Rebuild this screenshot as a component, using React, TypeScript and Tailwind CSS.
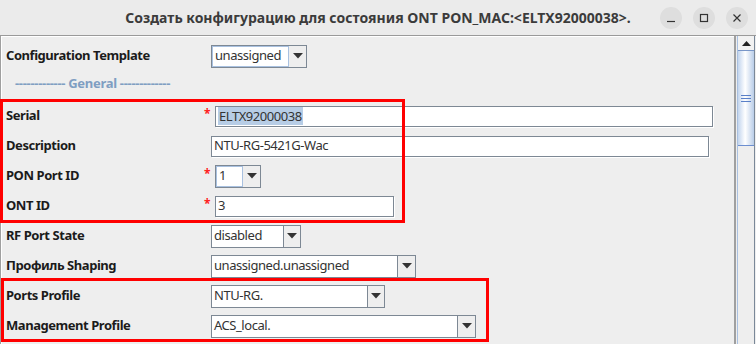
const font = { fontFamily: '"Noto Sans", "DejaVu Sans", sans-serif' };

function Combo({ value, width, textWidth, focused = false }: { value: string; width: number; textWidth: number; focused?: boolean }) {
  return (
    <div className="flex h-[23px] border border-[#7d8894] bg-[#eeeeee]" style={{ width }}>
      <div
        className={
          "flex items-center bg-white pl-[2px] text-[13px] tracking-[-0.45px] text-[#333] " +
          (focused ? "border border-[#a9c1e0]" : "border-r border-[#7d8894]")
        }
        style={{ width: textWidth }}
      >
        {value}
      </div>
      <div className="flex flex-1 items-center justify-center">
        <svg width="10" height="6" viewBox="0 0 10 6">
          <path d="M0 0 H10 L5 5.5 Z" fill="#333" />
        </svg>
      </div>
    </div>
  );
}

function Field({ value, width, selected = false }: { value: string; width: number; selected?: boolean }) {
  return (
    <div
      className="flex h-[21px] items-center border border-[#7d8894] bg-white pl-[2px] text-[13px] tracking-[-0.45px] text-[#333] shadow-[1px_1px_0_#fff]"
      style={{ width }}
    >
      {selected ? <span className="bg-[#b7cde6] px-px leading-[18px]">{value}</span> : value}
    </div>
  );
}

function Row({ label, required = false, children }: { label: string; required?: boolean; children: React.ReactNode }) {
  return (
    <div className="flex h-[30px] items-center">
      <div
        className={
          "pl-[5px] text-[13px] font-bold tracking-[-0.45px] text-[#1b1b1b] " + (required ? "w-[203px]" : "w-[210px]")
        }
      >
        {label}
      </div>
      {required && <div className="w-[11px] -translate-y-[2px] text-[12px] font-bold text-[#ff2020]">*</div>}
      {children}
    </div>
  );
}

function WinButton({ children }: { children: React.ReactNode }) {
  return <div className="flex h-[22px] w-[22px] items-center justify-center rounded-full bg-[#dedede]">{children}</div>;
}

export default function App() {
  return (
    <div className="relative flex h-[344px] w-[756px] flex-col overflow-hidden bg-[#ebebeb]" style={font}>
      <div className="grid h-[35px] shrink-0 grid-cols-[1fr_auto_1fr] items-center">
        <div />
        <div className="text-[14px] font-bold text-[#3b3b3b]">Создать конфигурацию для состояния ONT PON_MAC:&lt;ELTX92000038&gt;.</div>
        <div className="flex justify-end gap-[11px] pr-[8px]">
          <WinButton>
            <svg width="10" height="10" viewBox="0 0 10 10">
              <path d="M1 8.5 H9" stroke="#333" strokeWidth="1.2" />
            </svg>
          </WinButton>
          <WinButton>
            <svg width="10" height="10" viewBox="0 0 10 10">
              <rect x="1.5" y="1.5" width="7" height="7" fill="none" stroke="#333" strokeWidth="1.2" />
            </svg>
          </WinButton>
          <WinButton>
            <svg width="10" height="10" viewBox="0 0 10 10">
              <path d="M1.5 1.5 L8.5 8.5 M8.5 1.5 L1.5 8.5" stroke="#333" strokeWidth="1.2" />
            </svg>
          </WinButton>
        </div>
      </div>

      <div className="flex flex-1 border-t border-[#9a9a9a] bg-[#eeeeee]">
        <div className="flex flex-1 flex-col border-l border-r-2 border-[#9f9f9f] pt-[5px] shadow-[inset_1px_1px_0_#fff]">
          <Row label="Configuration Template">
            <Combo value="unassigned" width={96} textWidth={77} focused />
          </Row>
          <div className="flex h-[30px] items-center pb-[4px] pl-[14px] text-[13px] font-bold tracking-[-0.3px] text-[#7f9ec2]">
            ------------- General -------------
          </div>
          <Row label="Serial" required>
            <Field value="ELTX92000038" width={498} selected />
          </Row>
          <Row label="Description">
            <Field value="NTU-RG-5421G-Wac" width={498} />
          </Row>
          <Row label="PON Port ID" required>
            <Combo value="1" width={46} textWidth={27} focused />
          </Row>
          <Row label="ONT ID" required>
            <Field value="3" width={179} />
          </Row>
          <Row label="RF Port State">
            <Combo value="disabled" width={90} textWidth={72} />
          </Row>
          <Row label="Профиль Shaping">
            <Combo value="unassigned.unassigned" width={205} textWidth={186} />
          </Row>
          <Row label="Ports Profile">
            <Combo value="NTU-RG." width={174} textWidth={156} />
          </Row>
          <Row label="Management Profile">
            <Combo value="ACS_local." width={265} textWidth={246} />
          </Row>
        </div>

        <div className="mx-px flex w-[18px] flex-col border-l border-r border-l-[#a9c0e0] border-r-[#7a8898] bg-[#eeeeee]">
          <div className="flex h-[15px] items-center justify-center border-b border-[#7896c8] bg-[#f2f2f2]">
            <svg width="9" height="5" viewBox="0 0 9 5">
              <path d="M0 5 L4.5 0 L9 5 Z" fill="#222" />
            </svg>
          </div>
          <div className="flex h-[95px] items-center justify-center border-b border-[#6d8fd0] bg-[linear-gradient(90deg,#c3d5ee,#ffffff_45%,#b9cde8)]">
            <div className="flex flex-col gap-[2px]">
              <div className="h-px w-[10px] bg-[#5a80c8]" />
              <div className="h-px w-[10px] bg-[#5a80c8]" />
              <div className="h-px w-[10px] bg-[#5a80c8]" />
            </div>
          </div>
          <div className="flex-1" />
        </div>
      </div>

      <div className="pointer-events-none absolute left-0 top-[99px] h-[124px] w-[405px] border-[3px] border-[#ff0000]" />
      <div className="pointer-events-none absolute left-[1px] top-[278px] h-[64px] w-[488px] border-[3px] border-[#ff0000]" />
    </div>
  );
}
